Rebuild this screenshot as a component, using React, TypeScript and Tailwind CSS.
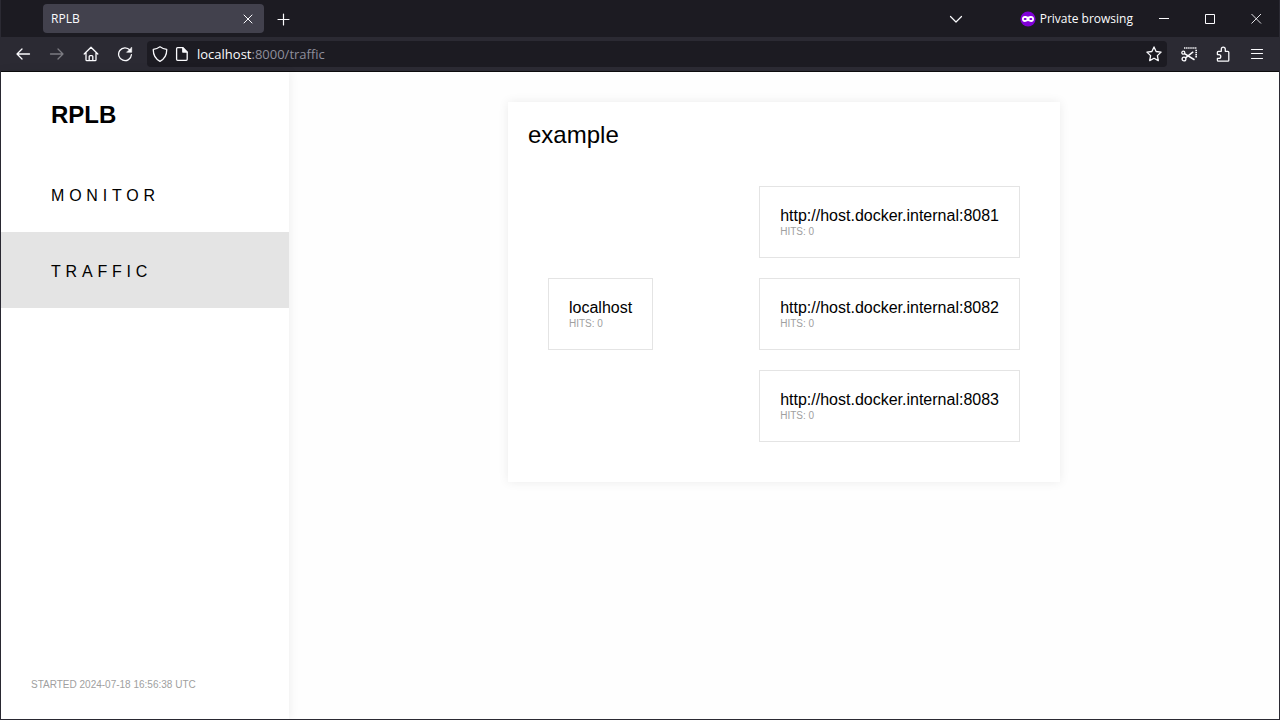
import type { ReactNode } from "react";

const upstreams = [
  { url: "http://host.docker.internal:8081", hits: 0 },
  { url: "http://host.docker.internal:8082", hits: 0 },
  { url: "http://host.docker.internal:8083", hits: 0 },
];

function IconButton({ label, className, children }: { label: string; className: string; children: ReactNode }) {
  return (
    <button type="button" aria-label={label} className={`flex shrink-0 items-center justify-center ${className}`}>
      {children}
    </button>
  );
}

function Icon({ children, className = "size-4" }: { children: ReactNode; className?: string }) {
  return (
    <svg
      viewBox="0 0 16 16"
      className={className}
      fill="none"
      stroke="currentColor"
      strokeWidth="1.3"
      strokeLinecap="round"
      strokeLinejoin="round"
      aria-hidden="true"
    >
      {children}
    </svg>
  );
}

function TabStrip() {
  return (
    <div className="flex h-[37px] items-center bg-[#1c1b22] pl-[42px]">
      <div className="flex h-[29px] w-[221px] items-center justify-between rounded bg-[#42414d] pl-2 pr-2">
        <span className="text-xs">RPLB</span>
        <IconButton label="Close tab" className="size-4">
          <Icon>
            <path d="M4 4l8 8M12 4l-8 8" strokeWidth="1" />
          </Icon>
        </IconButton>
      </div>
      <IconButton label="New tab" className="ml-[7px] size-6">
        <Icon>
          <path d="M8.500 3v11M3 8.500h11" strokeWidth="1.2" />
        </Icon>
      </IconButton>
      <div className="grow" />
      <IconButton label="List all tabs" className="mr-14 size-4">
        <Icon>
          <path d="M2.500 5.500L8 11l5.500-5.500" strokeWidth="1.2" />
        </Icon>
      </IconButton>
      <div className="flex items-center gap-1">
        <svg viewBox="0 0 16 16" className="size-4" aria-hidden="true">
          <circle cx="8" cy="8" r="7.6" fill="#8000d7" />
          <path
            fillRule="evenodd"
            fill="#fff"
            d="M4.900 5.100C3.100 5.100 2 6.200 2 8s1.200 3 2.900 3c1.400 0 2-.9 3.100-.9s1.700.9 3.100.9C12.800 11 14 9.800 14 8s-1.100-2.900-2.900-2.900C9.700 5.100 9 5.800 8 5.800S6.300 5.100 4.900 5.100zM5.100 6.900c.8 0 1.600.6 1.600 1.100s-.8 1-1.600 1S3.700 8.600 3.700 8s.6-1.100 1.400-1.100zM10.900 6.900c.8 0 1.400.5 1.400 1.100s-.6 1-1.400 1-1.600-.5-1.600-1 .8-1.100 1.600-1.100z"
          />
        </svg>
        <span className="text-xs">Private browsing</span>
      </div>
      <div className="ml-2 flex self-stretch">
        <IconButton label="Minimize" className="w-[46px]">
          <svg viewBox="0 0 11 11" className="size-[11px]" stroke="currentColor" fill="none" aria-hidden="true">
            <path d="M0 5.500h10" />
          </svg>
        </IconButton>
        <IconButton label="Maximize" className="w-[46px]">
          <svg viewBox="0 0 11 11" className="size-[11px]" stroke="currentColor" fill="none" aria-hidden="true">
            <path d="M.5 1.500h9v9h-9z" />
          </svg>
        </IconButton>
        <IconButton label="Close" className="w-[46px]">
          <svg viewBox="0 0 11 11" className="size-[11px]" stroke="currentColor" fill="none" aria-hidden="true">
            <path d="M.5 1l9.500 9.500M10 1L.5 10.500" strokeWidth=".9" />
          </svg>
        </IconButton>
      </div>
    </div>
  );
}

function Toolbar() {
  return (
    <div className="flex h-[35px] items-center border-b border-[#0c0c0d] bg-[#2b2a33] pl-[5px]">
      <IconButton label="Back" className="h-8 w-[34px]">
        <Icon>
          <path d="M14.500 8H2M7 3L2 8l5 5" />
        </Icon>
      </IconButton>
      <IconButton label="Forward" className="h-8 w-[34px] text-[#7c7b82]">
        <Icon>
          <path d="M1.500 8H14M9 3l5 5-5 5" />
        </Icon>
      </IconButton>
      <IconButton label="Home" className="h-8 w-[34px]">
        <Icon>
          <path d="M1.200 8L8 1.200 14.800 8M3 6.500v7.300c0 .6.300.9.900.9h8.200c.6 0 .9-.3.900-.9V6.500M6.200 14.500v-4c0-.6.300-.9.900-.9h1.800c.6 0 .9.300.900.9v4" />
        </Icon>
      </IconButton>
      <IconButton label="Reload" className="h-8 w-[34px]">
        <Icon>
          <path d="M13 4.200A6.400 6.400 0 1 0 14.400 8.700" />
          <path d="M14.700 1.500v4.800H9.900z" fill="currentColor" strokeWidth=".6" />
        </Icon>
      </IconButton>
      <div className="ml-[5px] flex h-[26px] min-w-0 grow items-center rounded bg-[#1c1b22] px-[5px]">
        <Icon className="size-4 shrink-0">
          <path d="M8 .8c2 1.500 4.200 2.300 6.700 2.500.2 5.200-1.500 9.400-6.700 12C2.800 12.700 1.100 8.500 1.300 3.300 3.800 3.100 6 2.300 8 .8z" />
        </Icon>
        <Icon className="ml-1.5 size-4 shrink-0">
          <path d="M3.600 1.700h5.200l4.400 4.400v7.200c0 .7-.3 1-1 1H3.600c-.7 0-1-.3-1-1V2.700c0-.7.300-1 1-1z" />
          <path d="M8.800 1.700v4.400h4.400z" fill="currentColor" />
        </Icon>
        <div className="ml-[7px] grow pt-0.5 text-[13px] text-[#8f8f9d]">
          <span className="text-[#fbfbfe]">localhost</span>:8000/traffic
        </div>
        <IconButton label="Bookmark this page" className="size-4">
          <Icon>
            <path d="M8 .9l2.100 4.600 5 .6-3.700 3.500.9 5L8 12.200l-4.300 2.400.9-5L.9 6.100l5-.6z" />
          </Icon>
        </IconButton>
      </div>
      <div className="mx-[5px] flex">
        <IconButton label="Take screenshot" className="h-8 w-[34px]">
          <Icon>
            <circle cx="2.300" cy="6.700" r="1.500" />
            <circle cx="3" cy="13" r="1.900" />
            <path d="M3.500 7.600L13 13.500M4.500 11.800L11.800 6.200" strokeWidth="1.500" />
            <path d="M3 2h13M15.200 3.800v8" strokeWidth="1.700" strokeLinecap="butt" strokeDasharray="1.400 .7" />
          </Icon>
        </IconButton>
        <IconButton label="Extensions" className="h-8 w-[34px]">
          <Icon>
            <path d="M3.400 15.200h9.400c.6 0 1-.4 1-1V6.300c0-.6-.4-1-1-1h-2.500V3.200a2 2 0 0 0-4 0v2.100H3.400c-.6 0-1 .4-1 1v2.300h1.500a1.900 1.900 0 0 1 0 3.800H2.400v1.800c0 .6.400 1 1 1z" />
          </Icon>
        </IconButton>
        <IconButton label="Open application menu" className="h-8 w-[34px]">
          <Icon>
            <path d="M2.500 3.500h11M2.500 7.500h11M2.500 12.500h11" strokeWidth="1.200" />
          </Icon>
        </IconButton>
      </div>
    </div>
  );
}

function Node({ name, hits }: { name: string; hits: number }) {
  return (
    <div className="border border-[#e4e4e4] px-5 pt-5 pb-[18px]">
      <div className="text-base leading-[18px]">{name}</div>
      <div className="text-[10px] leading-[14px] text-[#a0a0a0]">HITS: {hits}</div>
    </div>
  );
}

export default function App() {
  return (
    <div className="flex min-h-screen flex-col border-x border-b border-[#2b2a33] bg-[#fefefe] font-['Liberation_Sans',sans-serif] text-black">
      <header className="font-['Open_Sans',sans-serif] text-[#fbfbfe]">
        <TabStrip />
        <Toolbar />
      </header>
      <div className="flex grow">
        <aside className="z-10 flex w-72 shrink-0 flex-col bg-white shadow-[0_0_10px_rgba(0,0,0,0.08)]">
          <h1 className="px-[50px] pt-7 pb-[26px] text-2xl leading-[30px] font-bold">RPLB</h1>
          <nav className="flex flex-col tracking-[0.3em]">
            <a href="#monitor" className="px-[50px] pt-7 pb-6 leading-6">MONITOR</a>
            <a href="#traffic" aria-current="page" className="bg-[#e4e4e4] px-[50px] pt-7 pb-6 leading-6">TRAFFIC</a>
          </nav>
          <p className="mt-auto px-[30px] pb-7 text-[10px] leading-3 text-[#a0a0a0]">STARTED 2024-07-18 16:56:38 UTC</p>
        </aside>
        <main className="flex grow items-start justify-center p-[30px]">
          <section className="bg-white p-5 shadow-[0_0_10px_rgba(0,0,0,0.08)]">
            <h2 className="text-2xl leading-[26px]">example</h2>
            <div className="flex items-center gap-[106px] px-5 pt-[38px] pb-5">
              <Node name="localhost" hits={0} />
              <div className="flex flex-col gap-5">
                {upstreams.map((u) => (
                  <Node key={u.url} name={u.url} hits={u.hits} />
                ))}
              </div>
            </div>
          </section>
        </main>
      </div>
    </div>
  );
}
